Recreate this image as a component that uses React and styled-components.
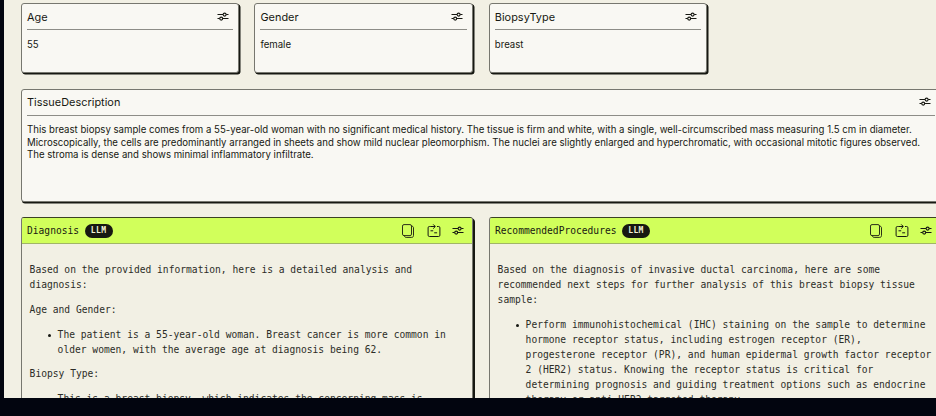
import React from 'react';
import styled, { createGlobalStyle } from 'styled-components';

const ink = '#171812';
const sans = "Inter, 'Liberation Sans', sans-serif";
const mono = "'DejaVu Sans Mono', monospace";

const GlobalStyle = createGlobalStyle`
  * { box-sizing: border-box; }
  html, body { margin: 0; background: #02050f; overflow: hidden; }
`;

const Screen = styled.div`
  width: 936px;
  height: 416px;
  padding: 0 0 18px 4px;
  background: #02050f;
  overflow: hidden;
`;

const Board = styled.main`
  height: 398px;
  padding: 3px 0 0 17px;
  background: #f2f0e4;
  color: ${ink};
  overflow: hidden;
  display: flex;
  flex-direction: column;
`;

const FieldRow = styled.section`
  display: grid;
  grid-template-columns: 218px 219px 218px;
  column-gap: 15.4px;
  flex: none;
  margin-bottom: 16px;
`;

const Card = styled.article`
  height: ${(p) => p.$height}px;
  width: ${(p) => (p.$width ? `${p.$width}px` : '100%')};
  flex: none;
  padding: 0 5px;
  background: #f9f8f3;
  border: 1px solid #77776f;
  border-radius: 3px;
  box-shadow: 1px 1px 0 ${ink}, ${(p) => (p.$width ? 1 : 1.5)}px 1.5px 0 ${ink};
`;

const CardHeader = styled.header`
  height: 26px;
  padding: 0 4px ${(p) => p.$lift || 0}px 0;
  display: flex;
  align-items: center;
  justify-content: space-between;
  border-bottom: 1px solid #8d8d87;
`;

const Title = styled.h2`
  margin: 0;
  font: 400 10.9px/14px ${sans};
  letter-spacing: 0.03px;
  white-space: nowrap;
`;

const Value = styled.div`
  padding-top: ${(p) => p.$top}px;
  font: 400 9.63px/12.6px ${sans};
`;

const Line = styled.span`
  display: block;
  white-space: nowrap;
`;

const OutputRow = styled.section`
  display: grid;
  grid-template-columns: 452px 452px;
  column-gap: 16px;
  margin-top: 15px;
  flex: none;
`;

const Panel = styled.article`
  height: 220px;
  background: #f2f0e4;
  border: 1px solid #77776f;
  border-top-color: #3b4222;
  border-radius: 3px;
  box-shadow: 1px 1px 0 ${ink}, 2px 2px 0 ${ink};
`;

const PanelHeader = styled.header`
  height: 26px;
  padding: 0 8px 0 5px;
  display: flex;
  align-items: center;
  background: #d1ff5b;
  border-bottom: 1px solid #a1b567;
  border-radius: 2px 2px 0 0;
`;

const PanelTitle = styled.h2`
  margin: 0;
  font: 400 9.62px/14px ${mono};
`;

const Badge = styled.span`
  width: 28px;
  height: 14px;
  margin-left: 5.5px;
  border-radius: 7px;
  background: ${ink};
  color: #f2f0d6;
  font: 700 8px/14px ${mono};
  letter-spacing: 0.4px;
  text-align: center;
`;

const Actions = styled.div`
  display: grid;
  grid-template-columns: 14px 14px 12px;
  align-items: center;
  margin-left: auto;
  column-gap: 11.5px;
`;

const Prose = styled.div`
  padding: 18px 7.6px 0;
  color: #2c2d27;
  font: 400 9.64px/15px ${mono};
`;

const Paragraph = styled.p`
  margin: 0 0 10px;
`;

const List = styled.ul`
  margin: 0 0 9px;
  padding: 0;
  list-style: none;
`;

const Item = styled.li`
  display: flex;
`;

const Dot = styled.span`
  flex: none;
  width: 3px;
  height: 3px;
  margin: 6.5px 7px 0 18px;
  border-radius: 50%;
  background: ${ink};
`;

const Icon = styled.svg`
  display: block;
  flex: none;
  fill: none;
  stroke: ${ink};
  stroke-width: ${(p) => p.$weight || 1.1};
`;

const SlidersIcon = () => (
  <Icon width="12" height="10" viewBox="0 0 12 10">
    <path d="M.5 2.5H6M9.2 2.5H11.5M.5 6.5H2.6M5.8 6.5H11.5" />
    <circle cx="7.6" cy="2.6" r="1.5" />
    <circle cx="4.2" cy="6.6" r="1.5" />
  </Icon>
);

const CopyIcon = () => (
  <Icon $weight={0.9} width="14" height="14" viewBox="0 0 14 14">
    <rect x="1.5" y=".6" width="9" height="11" rx="1.5" />
    <path d="M10.6 2.2c1.2 0 1.9.5 1.9 1.6v7.7c0 1.2-.7 1.9-1.9 1.9H5.2c-1.1 0-1.7-.6-1.7-1.7" />
  </Icon>
);

const RerunIcon = () => (
  <Icon $weight={1} width="14" height="14" viewBox="0 0 14 14">
    <path d="M3.8 2.5H2.4Q1.1 2.5 1.1 3.8v7.4q0 1.3 1.3 1.3h9.2q1.3 0 1.3-1.3V3.8q0-1.3-1.3-1.3H10M4 2.5h4M6.2.4l2.1 2.1-2.1 2.1M3.5 6.8h2.7M7.2 8.8h2.9" />
  </Icon>
);

const fields = [
  { name: 'Age', value: '55' },
  { name: 'Gender', value: 'female' },
  { name: 'BiopsyType', value: 'breast' },
];

const tissue = [
  'This breast biopsy sample comes from a 55-year-old woman with no significant medical history. The tissue is firm and white, with a single, well-circumscribed mass measuring 1.5 cm in diameter.',
  'Microscopically, the cells are predominantly arranged in sheets and show mild nuclear pleomorphism. The nuclei are slightly enlarged and hyperchromatic, with occasional mitotic figures observed.',
  'The stroma is dense and shows minimal inflammatory infiltrate.',
];

const Lines = ({ lines }) => lines.map((line) => <Line key={line}>{line}</Line>);

const Bullet = ({ lines }) => (
  <Item>
    <Dot />
    <div><Lines lines={lines} /></div>
  </Item>
);

const OutputPanel = ({ title, children }) => (
  <Panel>
    <PanelHeader>
      <PanelTitle>{title}</PanelTitle>
      <Badge>LLM</Badge>
      <Actions>
        <CopyIcon />
        <RerunIcon />
        <SlidersIcon />
      </Actions>
    </PanelHeader>
    <Prose>{children}</Prose>
  </Panel>
);

export default function App() {
  return (
    <>
      <GlobalStyle />
      <Screen>
        <Board>
          <FieldRow>
            {fields.map((field) => (
              <Card key={field.name} $height={70}>
                <CardHeader>
                  <Title>{field.name}</Title>
                  <SlidersIcon />
                </CardHeader>
                <Value $top={9}>{field.value}</Value>
              </Card>
            ))}
          </FieldRow>
          <Card $height={113} $width={920}>
            <CardHeader $lift={1}>
              <Title>TissueDescription</Title>
              <SlidersIcon />
            </CardHeader>
            <Value $top={8}><Lines lines={tissue} /></Value>
          </Card>
          <OutputRow>
            <OutputPanel title="Diagnosis">
              <Paragraph>
                <Lines lines={['Based on the provided information, here is a detailed analysis and', 'diagnosis:']} />
              </Paragraph>
              <Paragraph>Age and Gender:</Paragraph>
              <List>
                <Bullet lines={['The patient is a 55-year-old woman. Breast cancer is more common in', 'older women, with the average age at diagnosis being 62.']} />
              </List>
              <Paragraph>Biopsy Type:</Paragraph>
              <List>
                <Bullet lines={['This is a breast biopsy, which indicates the concerning mass is']} />
              </List>
            </OutputPanel>
            <OutputPanel title="RecommendedProcedures">
              <Paragraph>
                <Lines lines={['Based on the diagnosis of invasive ductal carcinoma, here are some', 'recommended next steps for further analysis of this breast biopsy tissue', 'sample:']} />
              </Paragraph>
              <List>
                <Bullet
                  lines={[
                    'Perform immunohistochemical (IHC) staining on the sample to determine',
                    'hormone receptor status, including estrogen receptor (ER),',
                    'progesterone receptor (PR), and human epidermal growth factor receptor',
                    '2 (HER2) status. Knowing the receptor status is critical for',
                    'determining prognosis and guiding treatment options such as endocrine',
                    'therapy or anti-HER2 targeted therapy.',
                  ]}
                />
              </List>
            </OutputPanel>
          </OutputRow>
        </Board>
      </Screen>
    </>
  );
}
